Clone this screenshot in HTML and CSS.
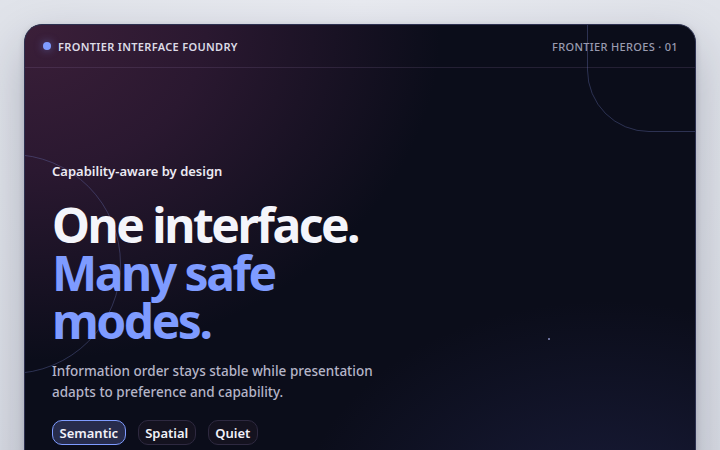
FILE: index.html
```html
<!DOCTYPE html>
<html lang="en">
<head>
<meta charset="utf-8">
<title>Frontier Heroes</title>
<link rel="stylesheet" href="styles.css">
</head>
<body>
<main class="card">
  <span class="deco-circle"></span>
  <span class="deco-corner"></span>
  <span class="deco-dot"></span>
  <header class="topbar">
    <div class="brand"><span class="brand-dot"></span>FRONTIER INTERFACE FOUNDRY</div>
    <div class="series">FRONTIER HEROES · 01</div>
  </header>
  <section class="hero">
    <p class="eyebrow">Capability-aware by design</p>
    <h1 class="title"><span class="t1">One interface.</span><span class="t2">Many safe modes.</span></h1>
    <p class="lead">Information order stays stable while presentation adapts to preference and capability.</p>
    <div class="chips">
      <button class="chip active">Semantic</button>
      <button class="chip">Spatial</button>
      <button class="chip">Quiet</button>
    </div>
  </section>
</main>
</body>
</html>
```
FILE: styles.css
```css
* { box-sizing: border-box; }
html, body { margin: 0; height: 100%; overflow: hidden; }
body {
  padding: 24px 24px 0 24px;
  background: radial-gradient(circle at 50% 0%, #e9ebf1 0%, #dfe2e9 70%, #d9dce4 100%);
  font-family: "Noto Sans", "Open Sans", sans-serif;
}
.card {
  position: relative;
  height: 560px;
  border-radius: 18px;
  border: 1px solid #2d3150;
  overflow: hidden;
  background:
    radial-gradient(ellipse 440px 320px at 580px 500px, rgba(42,46,96,0.45), rgba(40,44,90,0) 70%),
    radial-gradient(ellipse 520px 420px at 0px 0px, #3b1f39 0%, #2a1830 35%, rgba(16,14,30,0) 80%),
    #0b0d1a;
  box-shadow: 0 20px 50px rgba(20,24,50,0.25), 0 2px 6px rgba(20,24,50,0.15);
}
.deco-circle {
  position: absolute;
  left: -124px;
  top: 129px;
  width: 220px;
  height: 220px;
  border-radius: 50%;
  border: 1px solid rgba(110,120,190,0.35);
}
.deco-corner {
  position: absolute;
  left: 562px;
  top: -60px;
  width: 200px;
  height: 167px;
  border: 1px solid rgba(110,120,190,0.35);
  border-radius: 0 0 0 62px;
}
.deco-dot {
  position: absolute;
  left: 523px;
  top: 313px;
  width: 2px;
  height: 2px;
  background: #6a6f9a;
}
.topbar {
  position: relative;
  height: 43px;
  padding: 0 17px 0 18px;
  display: flex;
  align-items: center;
  justify-content: space-between;
  border-bottom: 1px solid rgba(150,120,170,0.18);
  font-size: 11px;
  letter-spacing: 0.03em;
}
.brand {
  display: flex;
  align-items: center;
  gap: 7px;
  color: #dcdbe6;
  font-weight: 600;
}
.brand-dot {
  width: 8px;
  height: 8px;
  border-radius: 50%;
  background: #7f9cff;
  box-shadow: 0 0 8px rgba(127,156,255,0.5);
}
.series {
  color: #9a9bb0;
  font-weight: 500;
}
.hero {
  position: relative;
  padding: 94px 27px 0 27px;
}
.eyebrow {
  margin: 0;
  font-size: 13px;
  font-weight: 600;
  color: #eceaf3;
  line-height: 18px;
}
.title {
  margin: 21px 0 0 0;
  font-size: 48px;
  line-height: 48px;
  font-weight: 700;
  letter-spacing: -0.052em;
  width: 360px;
}
.t1 { display: block; color: #f4f5fb; }
.t2 { display: block; color: #7e9bff; width: 260px; }
.lead {
  margin: 16px 0 0 0;
  max-width: 340px;
  font-size: 13.5px;
  line-height: 21px;
  color: #b5b5c8;
  font-weight: 500;
}
.chips {
  display: flex;
  gap: 12px;
  margin-top: 17px;
}
.chip {
  font-family: inherit;
  font-size: 13px;
  font-weight: 600;
  color: #f1f1f8;
  height: 25px;
  padding: 0 6.5px;
  border-radius: 10px;
  border: 1px solid #2e2940;
  background: #14121f;
}
.chip.active {
  border-color: #7e9bff;
  background: #272c4c;
}
```
